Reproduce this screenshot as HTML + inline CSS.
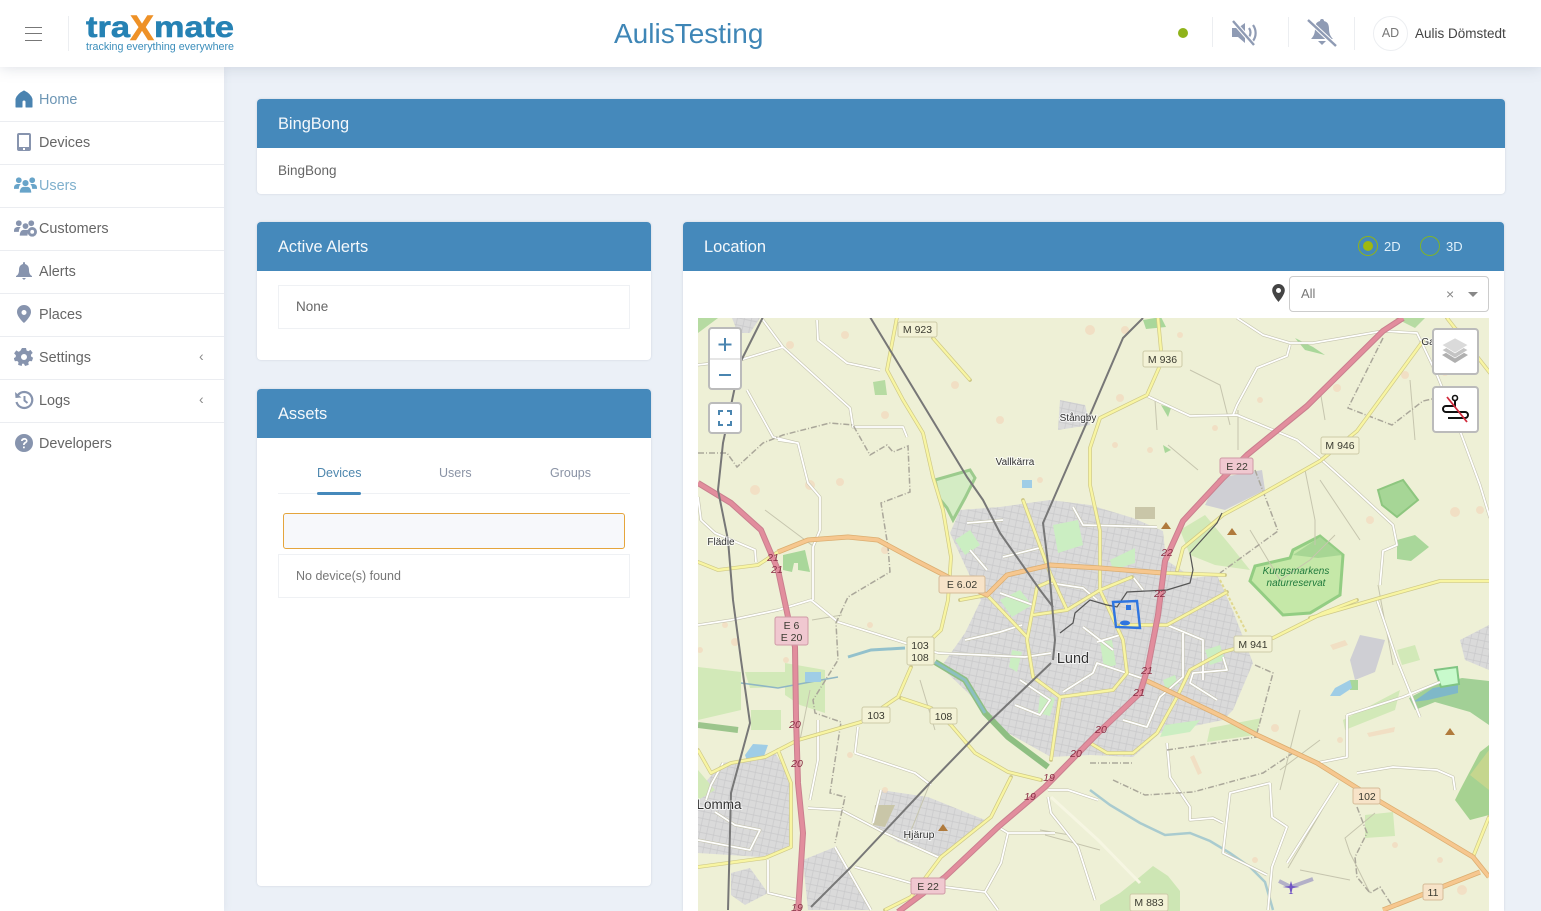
<!DOCTYPE html>
<html lang="en"><head><meta charset="utf-8"><title>traxmate</title>
<style>
*{box-sizing:border-box}
html,body{margin:0;padding:0;width:1541px;height:911px;overflow:hidden;background:#ebf0f7;font-family:"Liberation Sans",sans-serif;color:#555}
.a{position:absolute}
header{position:absolute;left:0;top:0;width:1541px;height:67px;background:#fff;box-shadow:0 0 14px rgba(120,130,150,.28);z-index:5}
aside{position:absolute;left:0;top:67px;width:224px;height:844px;background:#fff;box-shadow:0 0 8px rgba(120,130,150,.12);z-index:4}
.it{position:absolute;left:0;width:224px;height:43px;border-bottom:1px solid #ebedf1;font-size:14.4px;line-height:42px;color:#666;padding-left:39px}
.it svg{position:absolute;left:14px;top:10px;width:20px;height:20px;fill:#8794ae}
.chev{position:absolute;left:199px;top:-2px;font-size:14px;color:#888}
.card{position:absolute;background:#fff;border-radius:4px;box-shadow:0 0 2px rgba(120,130,150,.25)}
.ch{height:49px;background:#4589bb;color:#f4f8fb;font-size:16.4px;line-height:51px;padding-left:21px;border-radius:4px 4px 0 0}
.mbox{position:absolute;background:#fff;border:2px solid #bbb;border-radius:4px;z-index:3}
</style></head><body>
<header>
<div class="a" style="left:25px;top:27px;width:17px;height:14px;border-top:1px solid #777;border-bottom:1px solid #777"></div>
<div class="a" style="left:25px;top:33px;width:17px;height:1px;background:#777"></div>
<div class="a" style="left:68px;top:16px;width:1px;height:35px;background:#eceef1"></div>
<svg class="a" style="left:80px;top:8px" width="170" height="48">
<text x="6" y="29" font-family="Liberation Sans" font-weight="700" font-size="30" fill="#2682b4" stroke="#2682b4" stroke-width=".6" textLength="44" lengthAdjust="spacingAndGlyphs">tra</text>
<text x="50" y="32" font-family="Liberation Sans" font-weight="700" font-size="35" fill="#ee9127" stroke="#ee9127" stroke-width=".6" textLength="24" lengthAdjust="spacingAndGlyphs">X</text>
<text x="74" y="29" font-family="Liberation Sans" font-weight="700" font-size="30" fill="#2682b4" stroke="#2682b4" stroke-width=".6" textLength="80" lengthAdjust="spacingAndGlyphs">mate</text>
<text x="6" y="42" font-family="Liberation Sans" font-size="11" fill="#3a8dba" textLength="148" lengthAdjust="spacingAndGlyphs">tracking everything everywhere</text>
</svg>
<div class="a" style="left:614px;top:15px;font-size:28px;line-height:38px;color:#3f86b6;width:150px;white-space:nowrap">AulisTesting</div>
<div class="a" style="left:1178px;top:28px;width:10px;height:10px;border-radius:50%;background:#8fb31a"></div>
<div class="a" style="left:1212px;top:17px;width:1px;height:30px;background:#eceef1"></div>
<div class="a" style="left:1288px;top:17px;width:1px;height:30px;background:#eceef1"></div>
<div class="a" style="left:1354px;top:17px;width:1px;height:33px;background:#eceef1"></div>
<svg class="a" style="left:1230px;top:19px" width="30" height="28" fill="none">
<path d="M2 9h6l7-5v20l-7-6H2z" fill="#8f9bb4"/><path d="M19 9c2 3 2 6 0 9M23 6c3.500 5 3.500 11 0 16" stroke="#8f9bb4" stroke-width="2.200"/><path d="M3 2l21 24" stroke="#fff" stroke-width="4.500"/><path d="M3 2l21 24" stroke="#8f9bb4" stroke-width="2.400"/></svg>
<svg class="a" style="left:1306px;top:18px" width="32" height="30" fill="none">
<path d="M16 1c-1.500 0-2 1-2 2-4 1-5 4-5 8 0 5-2 8-4 10h22c-2-2-4-5-4-10 0-4-1-7-5-8 0-1-.5-2-2-2z" fill="#8f9bb4"/><path d="M12 23h8l-4 4z" fill="#8f9bb4"/><path d="M2 2l28 26" stroke="#fff" stroke-width="4.500"/><path d="M2 2l28 26" stroke="#8f9bb4" stroke-width="2.400"/></svg>
<div class="a" style="left:1373px;top:16px;width:35px;height:35px;border:1px solid #eceef1;border-radius:50%;font-size:12.500px;line-height:33px;text-align:center;color:#777">AD</div>
<div class="a" style="left:1415px;top:25px;font-size:13.500px;line-height:17px;color:#444;white-space:nowrap">Aulis Dömstedt</div>
</header>
<aside>
<div class="it" style="top:12px;color:#6d96b5"><svg viewBox="0 0 20 20" style="fill:#4a83b0"><path d="M10 2C6 4 3 7 2 10v8h6v-5a2 2 0 014 0v5h6v-8c-1-3-4-6-8-8z" stroke="#4a83b0" stroke-linejoin="round"/></svg>Home</div>
<div class="it" style="top:55px"><svg viewBox="0 0 20 20"><path fill-rule="evenodd" d="M5 1h10a2 2 0 012 2v14a2 2 0 01-2 2H5a2 2 0 01-2-2V3a2 2 0 012-2zm0 2v12h10V3zm4 13v2h2v-2z"/></svg>Devices</div>
<div class="it" style="top:98px;color:#7fb0cd"><svg viewBox="0 0 24 20" style="width:23px;left:14px;fill:#68a4c9"><circle cx="5" cy="5" r="3"/><circle cx="19" cy="5" r="3"/><circle cx="12" cy="8" r="3.200"/><path d="M0 13c0-3 2-4 4-4h3c-1 1-2 3-2 5H0zM24 13c0-3-2-4-4-4h-3c1 1 2 3 2 5h5zM6 18c0-4 2-6 4-6h4c2 0 4 2 4 6z"/></svg>Users</div>
<div class="it" style="top:141px"><svg viewBox="0 0 24 20" style="width:23px"><circle cx="5" cy="5" r="3"/><circle cx="18" cy="5" r="3"/><circle cx="12" cy="8" r="3"/><path d="M0 13c0-3 2-4 4-4h3c-1 1-2 3-2 5H0zM6 18c0-4 2-6 4-6h5l-1 6z"/><circle cx="19" cy="14" r="5"/><circle cx="19" cy="14" r="2" fill="#fff"/></svg>Customers</div>
<div class="it" style="top:184px"><svg viewBox="0 0 20 20"><path d="M10 1c-1 0-1 1-1 2-3 1-4 3-4 6 0 3-1 5-3 6v1h16v-1c-2-1-3-3-3-6 0-3-1-5-4-6 0-1 0-2-1-2zM8 17h4l-2 2z"/></svg>Alerts</div>
<div class="it" style="top:227px"><svg viewBox="0 0 20 20"><path fill-rule="evenodd" d="M10 1a7 7 0 00-7 7c0 5 7 11 7 11s7-6 7-11a7 7 0 00-7-7zm0 5a2.500 2.500 0 110 5 2.500 2.500 0 010-5z"/></svg>Places</div>
<div class="it" style="top:270px"><svg viewBox="0 0 20 20"><path fill-rule="evenodd" d="M8 1h4l.6 2.500 1.700.7 2.200-1.300 2.200 3-1.800 1.800.2 1.800 2 1.300-1.200 3.500-2.400-.3-1.200 1.400.4 2.500-3.600 1.100-1.200-2.200h-1.800L7.700 19l-3.600-1.100.4-2.500-1.200-1.400-2.400.3L-.3 11.300l2-1.300.2-1.800L.1 6.400l2.200-3 2.200 1.300 1.700-.7zm2 6a3 3 0 100 6 3 3 0 000-6z"/></svg>Settings<span class="chev">‹</span></div>
<div class="it" style="top:313px"><svg viewBox="0 0 20 20" fill="none" style="fill:none"><path d="M4 5a8 8 0 11-1.500 7" stroke="#8794ae" stroke-width="2.200"/><path d="M1 2l.5 6 6-.5z" fill="#8794ae"/><path d="M10.500 6v4.500l3 2.500" stroke="#8794ae" stroke-width="2"/></svg>Logs<span class="chev">‹</span></div>
<div class="it" style="top:356px;border-bottom:0"><svg viewBox="0 0 20 20"><circle cx="10" cy="10" r="9"/><path d="M7 8c0-4 6.500-4 6.500-.2 0 2.500-2.800 2.300-2.800 4.200H9c0-3 3-3 3-4.200 0-1.500-3-1.500-3.300.2zM9 13.500h1.800v1.800H9z" fill="#fff"/></svg>Developers</div>
</aside>

<div class="card" style="left:257px;top:99px;width:1248px;height:95px"><div class="ch">BingBong</div><div class="a" style="left:21px;top:63px;font-size:13.500px;line-height:17px;color:#666">BingBong</div></div>

<div class="card" style="left:257px;top:222px;width:394px;height:138px"><div class="ch">Active Alerts</div>
<div class="a" style="left:21px;top:63px;width:352px;height:44px;border:1px solid #eff1f4;font-size:13.500px;line-height:42px;padding-left:17px;color:#666">None</div></div>

<div class="card" style="left:257px;top:389px;width:394px;height:497px"><div class="ch">Assets</div>
<div class="a" style="left:60px;top:76px;font-size:12.500px;line-height:16px;color:#4e87ae">Devices</div>
<div class="a" style="left:182px;top:76px;font-size:12.500px;line-height:16px;color:#8a93a5">Users</div>
<div class="a" style="left:293px;top:76px;font-size:12.500px;line-height:16px;color:#8a93a5">Groups</div>
<div class="a" style="left:21px;top:104px;width:352px;height:1px;background:#eff1f4"></div>
<div class="a" style="left:60px;top:103px;width:44px;height:3px;border-radius:2px;background:#4589bb"></div>
<div class="a" style="left:26px;top:124px;width:342px;height:36px;background:#f7f8fb;border:1px solid #e5a53c;border-radius:3px"></div>
<div class="a" style="left:21px;top:165px;width:352px;height:44px;border:1px solid #eff1f4;font-size:12.500px;line-height:42px;padding-left:17px;color:#777">No device(s) found</div>
</div>

<div class="card" style="left:683px;top:222px;width:821px;height:689px;border-radius:4px 4px 0 0"><div class="ch">Location</div>
<div class="a" style="left:675px;top:14px;width:20px;height:20px;border:1px solid #8fb31a;border-radius:50%"></div>
<div class="a" style="left:680px;top:19px;width:10px;height:10px;border-radius:50%;background:#9fb80f"></div>
<div class="a" style="left:701px;top:16px;font-size:13px;line-height:17px;color:#dff0fa">2D</div>
<div class="a" style="left:737px;top:14px;width:20px;height:20px;border:1px solid #7fb32a;border-radius:50%"></div>
<div class="a" style="left:763px;top:16px;font-size:13px;line-height:17px;color:#dff0fa">3D</div>
<svg class="a" style="left:588px;top:61px" width="15" height="20"><path fill-rule="evenodd" fill="#444" d="M7.500 1A6.300 6.300 0 001.200 7.300C1.200 12 7.500 19 7.500 19s6.300-7 6.300-11.700A6.300 6.300 0 007.500 1zm0 4a2.500 2.500 0 110 5 2.500 2.500 0 010-5z"/></svg>
<div class="a" style="left:606px;top:54px;width:200px;height:36px;border:1px solid #ccc;border-radius:4px;background:#fff;font-size:13px;line-height:34px;padding-left:11px;color:#777">All
<span class="a" style="left:156px;top:0;font-size:14px;color:#888">×</span>
<span class="a" style="left:178px;top:15px;width:0;height:0;border-left:5px solid transparent;border-right:5px solid transparent;border-top:5px solid #888"></span></div>
</div>

<svg class="a" style="left:698px;top:318px;z-index:2" width="791" height="593" viewBox="698 318 791 593" font-family="Liberation Sans,sans-serif">
<defs>
<pattern id="u" width="7" height="7" patternUnits="userSpaceOnUse" patternTransform="rotate(12)"><rect width="7" height="7" fill="#dadada"/><path d="M0 3.500h7M3.500 0v7" stroke="#c9c9cb" stroke-width=".7"/></pattern>
</defs>
<rect x="698" y="318" width="791" height="593" fill="#eef0d6"/>
<!-- urban -->
<path fill="url(#u)" d="M950 533L960 510 1000 507 1050 500 1090 505 1133 518 1163 531 1166 560 1193 578 1217 575 1233 611 1253 663 1233 710 1223 720 1160 733 1133 757 1090 755 1051 757 1008 733 965 690 941 667 965 633 981 600z"/>
<path fill="url(#u)" d="M881 790L928 797 985 820 941 857 898 842 873 825zM698 790L723 763 775 753 790 777 790 847 761 857 698 853zM803 860L835 847 871 910H808zM731 873L750 868 768 893 745 905 731 895zM1060 400L1085 405 1090 425 1058 430zM1460 640L1489 625V670L1465 660zM732 318H760L750 333H738z"/>
<path fill="#cfcfd4" d="M1218 478L1262 470 1265 490 1225 510 1205 505zM1360 635L1385 640 1375 672 1355 680 1350 660z"/>
<path fill="#c9c6a8" d="M875 805l20 0-10 22-12-2zM1135 507h20v12h-20z"/>
<!-- greens -->
<g fill="#d2e9b8">
<path d="M698 667L741 672 741 710 698 720zM745 672L785 672 785 687 750 688zM785 663L825 670 825 713 800 705 785 695zM751 710L781 710 781 730 751 730zM698 770L715 790 698 800z"/>
<path d="M1180 530L1205 515 1230 545 1250 570 1215 565 1190 555zM1343 720L1400 690 1395 710 1345 730zM1210 728L1262 718 1255 735 1207 742zM1365 815l28-3 2 24-30 2zM1397 650l18-5 5 15-18 5z"/>
</g>
<g fill="#cbeec2">
<path d="M1053 525l25-5 5 25-25 8zM955 540l15-10 10 15-15 10zM1100 642l12-2 4 25-12 3zM1000 600l20-10 12 15-20 12zM1205 650l15-5 5 15-15 5zM1040 695l15 3-5 18-12-3zM1110 560l25-12 0 15-22 7zM1012 650l10 2 -5 20-8-5zM1163 680l12-5 3 10-12 5zM1200 720l-35 5 -5 12 30-5z"/>
</g>
<path d="M1250 581L1255 566 1290 558 1293 550 1320 536 1343 555 1340 595 1310 613 1283 615z" fill="#c5e8a8" stroke="#93cd83" stroke-width="3"/>
<path d="M1293 555L1320 537 1342 555 1318 558z" fill="#a7d694"/>
<path d="M1378 490L1403 480 1418 500 1397 517 1382 505z" fill="#a6d696" stroke="#8dc67f" stroke-width="2"/>
<path d="M1397 540l18-5 14 12-18 14-14-2z" fill="#a9d79a"/>
<path d="M1295 338l18 9 12 8-20-5zM1143 320l18-3 5 10-20 2zM1161 405l10 3-3 9zM1163 445l8 5-6 3zM783 555l22-5 5 22-12-2 0-7-4 0-2 9-9-2zM1350 680l8 0 0 10-8 0z" fill="#a9d79a"/>
<path d="M1460 790L1480 752 1489 745V815L1470 820 1455 800z" fill="#a6d291"/>
<path d="M1470 775l19-25v40z" fill="#c5d68e"/>
<path d="M1409 698l23-12 30-8 27 3V725L1470 712 1435 702 1415 710z" fill="#a2d096"/>
<path d="M1413 702l20-14 25-4 0 9-30 7z" fill="#7fb8c8"/>
<path d="M1435 670l22-3 2 17-18 3z" fill="#c8facc" stroke="#80c583" stroke-width="2"/>
<path d="M935 480l35-10 5 8-10 20-12 22-6-12-8-10z" fill="#d4ecc4" stroke="#9ccb8d" stroke-width="3"/>
<path d="M1100 905l20-12 15-12 18-15 15 10 12 15v20h-80z" fill="#cde6b4"/>
<path d="M698 318h20l-20 15zM1395 318h30l-10 10zM873 382l12-2 2 15-12 0z" fill="#b6dba2"/>
<path d="M935 662L965 680 985 713 1008 737 1048 767" fill="none" stroke="#8ebf82" stroke-width="6"/>
<path d="M935 662L965 680 985 713" fill="none" stroke="#8cc0c0" stroke-width="3"/>
<path d="M698 725l40 5" fill="none" stroke="#9cc58c" stroke-width="6"/>
<!-- patches -->
<g fill="#f2dcc0" opacity=".8">
<circle cx="790" cy="345" r="4"/><circle cx="845" cy="335" r="4"/><circle cx="840" cy="482" r="4"/><circle cx="810" cy="485" r="5"/><circle cx="885" cy="415" r="4"/><circle cx="955" cy="385" r="4"/><circle cx="885" cy="550" r="4"/><circle cx="1125" cy="330" r="4"/><circle cx="1180" cy="335" r="3"/><circle cx="1120" cy="398" r="4"/><circle cx="1150" cy="450" r="3"/><circle cx="1215" cy="428" r="3"/><circle cx="1337" cy="388" r="4"/><circle cx="1405" cy="375" r="4"/><circle cx="1445" cy="372" r="4"/><circle cx="1455" cy="335" r="8"/><circle cx="1455" cy="512" r="5"/><circle cx="1480" cy="510" r="4"/><circle cx="1370" cy="520" r="4"/><circle cx="1090" cy="330" r="5"/><circle cx="1260" cy="400" r="3"/><circle cx="1115" cy="445" r="3"/><circle cx="1438" cy="430" r="3"/><circle cx="1040" cy="480" r="3"/><circle cx="1000" cy="420" r="4"/><circle cx="755" cy="490" r="5"/><circle cx="725" cy="625" r="3"/><circle cx="735" cy="642" r="4"/><circle cx="870" cy="625" r="3"/><circle cx="786" cy="660" r="3"/><circle cx="850" cy="755" r="3"/><circle cx="885" cy="790" r="3"/><circle cx="1255" cy="860" r="3"/><circle cx="1275" cy="728" r="4"/><circle cx="1340" cy="740" r="3"/><circle cx="1462" cy="890" r="5"/><circle cx="1440" cy="860" r="3"/><circle cx="1395" cy="845" r="3"/><circle cx="700" cy="650" r="3"/>
<path d="M1367 733l28-6-1 5-25 5zM1330 645l15-5 3 5-15 5zM1190 757l8 18 4-2-8-18z"/>
</g>
<!-- water -->
<g fill="none">
<path d="M1090 790l20 15 30 18 25 12 25-2 20 8 20 12 20 14 15 15 8 28" stroke-width="2.500" stroke="#a9cbcf"/>
<path d="M848 657l23-7 34-2" stroke-width="3" stroke="#93c1cc"/>
<path d="M838 677l-17 3-43 8-37-5" stroke-width="1.600" stroke="#8eb6c4"/>
</g>
<path fill="#9fcde6" d="M805 672h16v10h-16zM745 755l8-11 15 1-4 11-17 5zM1022 480l10 0 0 8-10 0zM1350 680l-15 8-5 8 10 0 12-8z"/>
<!-- thin gray -->
<g fill="none" stroke="#c6c5ae" stroke-width="1">
<path d="M765 510l48 36M1190 370l30 15 10 40M1238 450v-40M1168 445l30 25M1155 400l2 30M1305 470l10 50 0 25M1250 530l30 50 30-20 25-25M1320 480l40 60M1378 585l15 80M1280 770l40-30M1338 783l-50 85M1100 850l-55-15M1300 710l-20 80M1040 830l30 5M1370 893l-20-40-5-15 30-25M1300 870l50 10M800 740l10-50M920 680l15 50M812 620l30-5M1320 390l5 30M1410 380l5 60M930 783l-20 50 -5 10"/>
</g>
<!-- white roads -->
<g fill="none" stroke="#c5c4b0" stroke-width="3" stroke-linejoin="round"><path id="wr" d="M698 625L731 620 778 610 811 600 838 622 905 643 938 653 1025 657 1051 653M778 440L798 443 808 483 820 497 820 530 813 547 813 600M763 320L783 347 850 408 853 427 903 427 907 437M783 347L740 360 697 365M817 320L818 340 847 363 880 370M747 390L773 437 797 443M698 497L701 520 715 533 755 550 756 562M1237 318L1263 335 1290 343 1313 343 1383 331 1417 333 1437 375 1460 431 1480 485 1490 518M1290 345L1287 356 1257 368 1237 405 1233 415M1147 396L1190 416 1237 415 1297 440 1323 461 1353 488 1393 525 1397 545 1383 551 1380 585M1377 600L1397 660 1420 717M1347 715L1403 697 1440 682M1347 715L1347 757 1317 763M1357 773L1393 767 1437 770 1453 777 1455 790M1270 783L1230 793 1223 853 1267 875M1270 783L1272 817 1287 827 1272 867 1268 910M1287 863L1338 783M1167 743L1170 777 1190 807 1190 820 1213 818 1223 823M855 753L915 773 931 785M858 727L855 753M818 720L818 760 810 800M808 808L841 810 885 833 938 857M881 790L873 823M835 847L871 910M855 867L911 883M945 887L985 892 998 910M985 892L1001 863 1008 833 1055 833M998 827L1008 833M768 860L768 893 798 900M1048 797L1051 813 1078 847 1095 900M1048 790L1068 790 1098 800M698 840L750 850 760 830 735 825 715 812M723 763L711 785 706 800M1073 507L1083 525 1157 527M967 523L1003 520M970 550L987 570M1003 557L1043 547M1000 593L1033 605M1097 642L1120 635M1093 673L1097 663 1147 680M1063 692L1093 673M1183 633L1183 677 1160 697 1147 727 1123 720M1133 577L1143 590M1050 583L1083 588 1097 600M1083 627L1113 650M1223 657L1227 670 1193 673 1190 683 1217 700M1167 625L1203 640 1203 680M1020 680L1050 700 1040 715 1015 705M965 640L1000 632 1022 625"/></g>
<g fill="none" stroke="#fff" stroke-width="1.800" stroke-linejoin="round"><use href="#wr"/></g>
<path d="M1051 797L1098 840 1140 883" fill="none" stroke="#f6f6e2" stroke-width="3"/>
<!-- dashed boundaries -->
<g fill="none" stroke="#aaa79a" stroke-width="1.500" stroke-dasharray="6 2 1 2">
<path d="M698 453L727 453 737 467 763 443 783 435 830 423 853 425 870 455 887 445 893 452 908 446 910 492 881 503 888 547 890 572 848 597 836 623 838 660 813 700 815 713 841 722 830 793 845 797 835 843"/>
<path d="M1383 338L1348 408 1392 425 1423 401 1450 395M1255 470L1278 531 1220 573M1255 665L1273 673 1257 733M1090 763L1132 763M1113 780L1145 795 1193 792 1263 773 1293 753M1357 807L1367 833 1355 857 1357 877 1370 893 1380 887 1393 907M1167 750L1257 737"/>
</g>
<!-- yellow -->
<g fill="none" stroke="#cfc988" stroke-width="3.800" stroke-linejoin="round" stroke-linecap="round">
<path id="ya" d="M897 317L887 370 903 400 923 433 933 477 943 510 951 557 948 600 941 630 920 650M911 667L898 697 861 722 798 740 765 757 731 763 711 773 698 750M901 698L931 708 951 725 975 753 1008 772 1041 780M1011 777L991 817 941 857 911 897 885 910M778 750L791 783 791 847 765 858 698 867M698 562L718 570 758 565 778 552M1158 318L1162 361 1147 395 1100 418 1090 448 1090 485 1100 531 1100 590 1123 640 1127 673 1113 690 1060 697 1033 677 1027 640 1037 587 1053 580M1023 500L1050 573 1067 610 1033 615M1067 610L1100 590 1132 577M1423 341L1357 431 1320 461 1267 491 1223 515 1183 548 1177 571M1165 573L1225 575M1310 618L1390 595 1440 581 1490 581M1357 600L1323 613 1273 638 1223 652 1190 670 1177 697 1157 733 1133 753 1107 753 1090 743M1120 625L1167 625 1200 607 1227 592M1473 857L1489 817M1447 318L1490 373M933 338L970 380M1060 697L1051 760M987 595L1027 637M960 600L987 595"/>
</g>
<g fill="none" stroke="#f8f5a2" stroke-width="2.400" stroke-linejoin="round"><use href="#ya"/></g>
<path d="M1220 580L1247 633" fill="none" stroke="#e0d890" stroke-width="2" stroke-dasharray="3 2"/>
<!-- orange -->
<g fill="none" stroke="#dcae70" stroke-width="5" stroke-linejoin="round">
<path id="oa" d="M778 552L808 540 848 537 878 540 915 560 948 577 987 595 1007 575 1050 565 1100 568 1163 573M1145 680L1177 695 1223 717 1257 735 1317 763 1357 788 1423 827 1473 857 1489 877M1383 910L1480 872"/>
</g>
<g fill="none" stroke="#f6c78f" stroke-width="3.400" stroke-linejoin="round"><use href="#oa"/></g>
<!-- motorway -->
<g fill="none" stroke="#c97f8e" stroke-width="6" stroke-linejoin="round"><path id="m" d="M1403 318L1383 331 1307 406 1247 455 1223 478 1183 521 1165 561 1158 615 1148 667 1140 693 1098 733 1045 787 998 827 945 877 898 912M698 483L731 503 761 530 778 570 788 617 795 647 796 717 797 750 798 783 803 833 798 912"/></g>
<g fill="none" stroke="#e28d9d" stroke-width="4" stroke-linejoin="round"><use href="#m"/></g>
<!-- rail -->
<g fill="none" stroke="#777" stroke-width="2" stroke-linejoin="round">
<path d="M870 317L967 477 983 500 1000 533 1040 590 1053 607M1143 318L1123 338 1090 415 1053 500 1043 523 1050 580 1055 640 1053 660M1051 663L988 723 928 785 851 867 811 907M763 317L740 363 723 443 718 490 728 540 733 600 741 660 750 723 731 793 728 910"/>
</g>
<!-- track -->
<path d="M1060 633L1073 623 1075 613 1090 600 1107 605 1117 607 1127 592 1167 590 1190 583 1193 570 1190 553 1217 523 1222 513" fill="none" stroke="#555" stroke-width="1.200"/>
<path d="M1113 602L1137 601 1140 628 1116 627z" fill="none" stroke="#2f75e0" stroke-width="2.400"/>
<rect x="1126" y="605" width="5" height="5" fill="#2f75e0"/>
<ellipse cx="1125" cy="623" rx="5" ry="2.500" fill="#2f75e0"/>
<!-- peaks -->
<path d="M1166 522l5 7h-10zM1232 528l5 7h-10zM943 824l5 7h-10zM1450 728l5 7h-10z" fill="#b07a3c"/>
<!-- airport -->
<path d="M1279 881l12 6 22-8" fill="none" stroke="#b3b0c8" stroke-width="4"/>
<path d="M1291 881l1.500 5 7 1-7 1-1 5 2 1h-5l2-1-1-5-7-1 7-1z" fill="#7155c4"/>
<!-- shields -->
<g stroke-width="1">
<g fill="#f3f2d6" stroke="#cdcba8">
<rect x="898" y="322" width="39" height="15" rx="2"/><rect x="1143" y="351" width="39" height="16" rx="2"/><rect x="1321" y="437" width="38" height="17" rx="2"/><rect x="907" y="637" width="27" height="28" rx="2"/><rect x="862" y="707" width="28" height="16" rx="2"/><rect x="930" y="708" width="27" height="16" rx="2"/><rect x="1234" y="636" width="38" height="16" rx="2"/><rect x="1130" y="894" width="38" height="17" rx="2"/>
</g>
<g fill="#f0c8d0" stroke="#cf9aa6">
<rect x="1220" y="458" width="33" height="16" rx="2"/><rect x="775" y="617" width="33" height="28" rx="2"/><rect x="911" y="878" width="34" height="16" rx="2"/>
</g>
<g fill="#f7e3c8" stroke="#d6bb98">
<rect x="939" y="576" width="46" height="17" rx="2"/><rect x="1353" y="788" width="27" height="16" rx="2"/><rect x="1423" y="884" width="20" height="16" rx="2"/>
</g>
</g>
<g font-size="10.500" fill="#3a3a30" text-anchor="middle">
<text x="917.500" y="333">M 923</text><text x="1162.500" y="363">M 936</text><text x="1340" y="449">M 946</text><text x="920" y="649">103</text><text x="920" y="661">108</text><text x="876" y="719">103</text><text x="943.500" y="720">108</text><text x="1253" y="648">M 941</text><text x="1149" y="906">M 883</text><text x="1237" y="470">E 22</text><text x="791.500" y="629">E 6</text><text x="791.500" y="641">E 20</text><text x="928" y="890">E 22</text><text x="962" y="588">E 6.02</text><text x="1367" y="800">102</text><text x="1433" y="896">11</text>
</g>
<g font-size="10.500" font-style="italic" fill="#8a2f45" text-anchor="middle">
<text x="1167" y="556">22</text><text x="1160" y="597">22</text><text x="1147" y="674">21</text><text x="1139" y="696">21</text><text x="1101" y="733">20</text><text x="1076" y="757">20</text><text x="1049" y="781">19</text><text x="1030" y="800">19</text><text x="773" y="561">21</text><text x="777" y="573">21</text><text x="795" y="728">20</text><text x="797" y="767">20</text><text x="797" y="911">19</text>
</g>
<g fill="#333" text-anchor="middle" stroke="#fff" stroke-width="2" stroke-opacity=".7" paint-order="stroke">
<text x="1078" y="421" font-size="10">Stångby</text><text x="1015" y="465" font-size="10">Vallkärra</text><text x="721" y="545" font-size="10">Flädie</text><text x="1073" y="663" font-size="14.500">Lund</text><text x="719" y="809" font-size="13.500">Lomma</text><text x="919" y="838" font-size="10.500">Hjärup</text><text x="1428" y="345" font-size="10">Ga</text>
</g>
<g fill="#1f7a3c" font-size="10" font-style="italic" text-anchor="middle"><text x="1296" y="574">Kungsmarkens</text><text x="1296" y="586">naturreservat</text></g>
</svg>

<div class="mbox" style="left:708px;top:327px;width:34px;height:63px">
<svg class="a" style="left:0;top:0" width="30" height="59"><path d="M15 9v13M8.500 15.500h13M9 46h12" stroke="#4a85b0" stroke-width="2"/><path d="M0 30h30" stroke="#ccc"/></svg></div>
<div class="mbox" style="left:708px;top:402px;width:34px;height:32px">
<svg class="a" style="left:0;top:0" width="30" height="28"><path d="M9 11V7h4M17 7h4v4M21 17v4h-4M13 21H9v-4" fill="none" stroke="#4a85b0" stroke-width="2"/></svg></div>
<div class="mbox" style="left:1432px;top:328px;width:47px;height:47px">
<svg class="a" style="left:0;top:0" width="43" height="43"><path d="M21 18l13 7-13 8-13-8z" fill="#b0b0b0"/><path d="M21 13l13 7-13 8-13-8z" fill="#c4c4c4" stroke="#fff" stroke-width=".7"/><path d="M21 8l13 7-13 8-13-8z" fill="#dadada" stroke="#fff" stroke-width=".7"/></svg></div>
<div class="mbox" style="left:1432px;top:386px;width:47px;height:47px">
<svg class="a" style="left:0;top:0" width="43" height="43" fill="none"><circle cx="21" cy="10" r="2.500" stroke="#111" stroke-width="1.600"/><path d="M21 13v5H12a2.500 2.500 0 000 6h19a2.500 2.500 0 010 6H14" stroke="#111" stroke-width="2"/><path d="M13 9l20 25" stroke="#d22b3c" stroke-width="1.800"/></svg></div>
</body></html>
